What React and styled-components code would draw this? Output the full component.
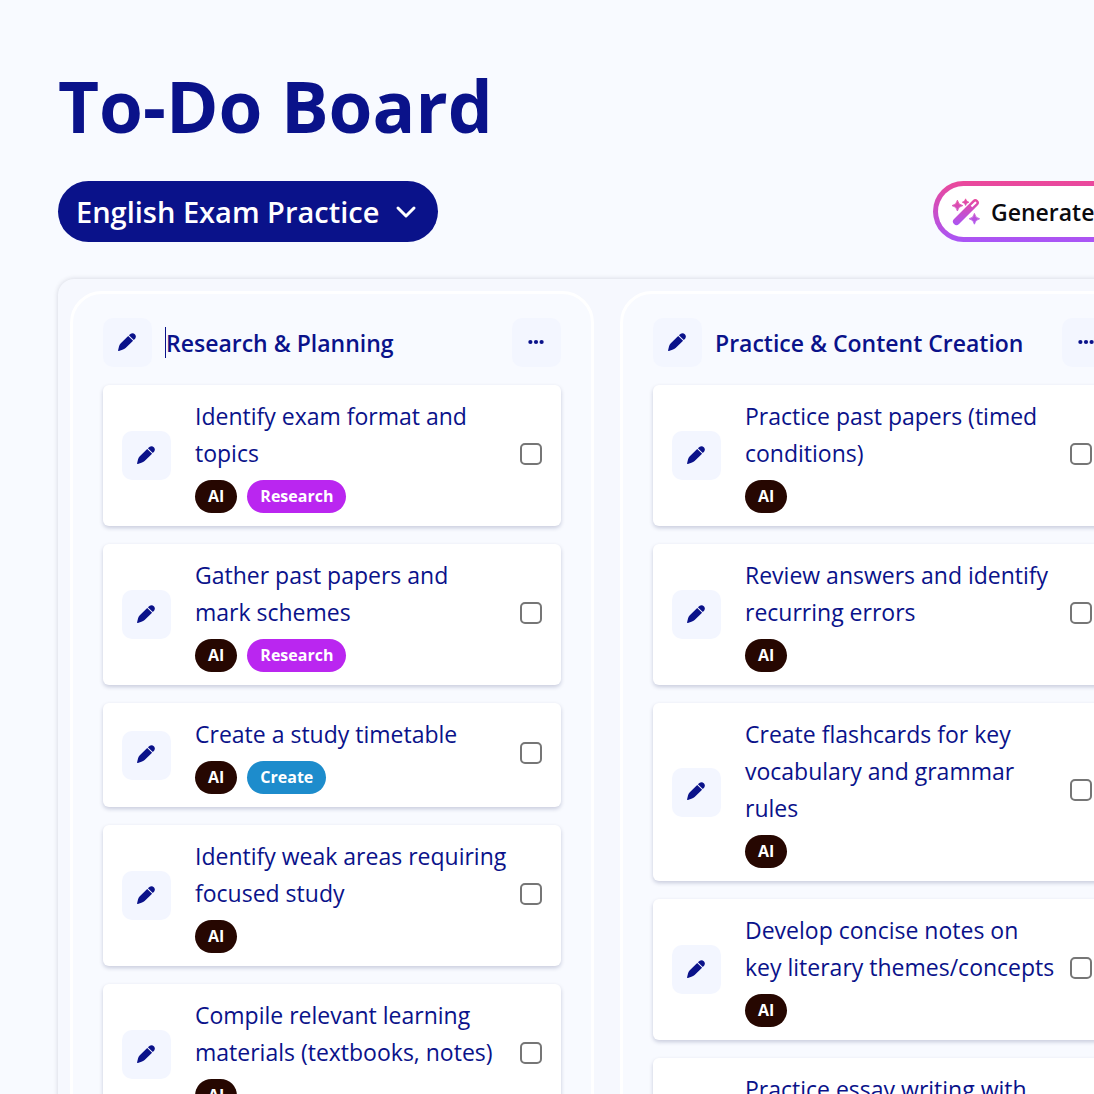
import styled, { createGlobalStyle } from "styled-components";

const GlobalStyle = createGlobalStyle`
  * {
    box-sizing: border-box;
  }

  html {
    scrollbar-width: none;
  }

  body {
    margin: 0;
    background-color: #f8faff;
    color: #0a128a;
    font-family: "Open Sans", "Noto Sans", sans-serif;
  }

  button, input, select {
    font-family: inherit;
    color: inherit;
  }
`;

const Page = styled.div`
  min-height: 100vh;
  padding: 59px 58px;
  overflow-x: hidden;
  scrollbar-width: none;
`;

const Content = styled.main`
  display: flex;
  flex-direction: column;
  width: max-content;
  min-width: 100%;
`;

const PageTitle = styled.h1`
  margin: 0 0 28px;
  font-size: 71px;
  line-height: 94px;
  font-weight: 700;
`;

const Toolbar = styled.div`
  display: flex;
  justify-content: space-between;
  align-items: center;
  margin-bottom: 37px;
`;

const BoardPicker = styled.div`
  display: grid;
  align-items: center;
  border-radius: 31px;
  background-color: #0a128a;
  color: #ffffff;
`;

const BoardSelect = styled.select`
  grid-area: 1 / 1;
  height: 61px;
  padding: 0 58px 0 18px;
  border: none;
  border-radius: 31px;
  appearance: none;
  background: none;
  font-size: 29px;
  font-weight: 600;
`;

const PickerArrow = styled.svg`
  grid-area: 1 / 1;
  justify-self: end;
  width: 22px;
  height: 22px;
  margin-right: 21px;
  pointer-events: none;
`;

const GenerateBtn = styled.button`
  display: flex;
  align-items: center;
  gap: 11px;
  min-width: 223px;
  height: 61px;
  padding: 0 14px;
  border: 5px solid transparent;
  border-radius: 31px;
  background:
    linear-gradient(#ffffff, #ffffff) padding-box,
    linear-gradient(#ec4899, #a855f7) border-box;
  color: #0b0b0f;
  font-size: 23px;
  font-weight: 600;
`;

const Board = styled.section`
  display: flex;
  align-items: flex-start;
  gap: 26px;
  padding: 12px;
  border-radius: 16px;
  background-color: #f6f8fe;
  box-shadow: 0 0 5px rgba(20, 20, 50, 0.16);
`;

const Column = styled.section`
  display: flex;
  flex-direction: column;
  flex: 0 0 auto;
  gap: 18px;
  width: 524px;
  padding: 24px 30px;
  border: 3px solid #ffffff;
  border-radius: 32px;
  background-color: #f8faff;
`;

const ColumnHeader = styled.header`
  display: flex;
  align-items: center;
  gap: 13px;
`;

const ColumnTitle = styled.input`
  flex: 1;
  min-width: 0;
  height: 31px;
  padding: 0;
  border: 0 solid #0a128a;
  border-left-width: ${({ $editing }) => ($editing ? "1px" : "0")};
  background: none;
  font-size: 23px;
  font-weight: 600;
`;

const SquareBtn = styled.button`
  display: flex;
  flex-shrink: 0;
  justify-content: center;
  align-items: center;
  width: 49px;
  height: 49px;
  padding: 0 1px 2px 0;
  border: none;
  border-radius: 10px;
  background-color: #f3f6ff;
`;

const TaskList = styled.ul`
  display: flex;
  flex-direction: column;
  gap: 18px;
  margin: 0;
  padding: 0;
  list-style: none;
`;

const Card = styled.li`
  display: flex;
  align-items: center;
  padding: 13px 19px;
  border-radius: 6px;
  background-color: #ffffff;
  box-shadow: 0 2px 4px rgba(10, 18, 80, 0.2);
`;

const CardBody = styled.div`
  flex: 1;
  min-width: 0;
  margin: 0 11px 0 24px;
`;

const CardText = styled.label`
  display: block;
  font-size: 23px;
  line-height: 37px;
`;

const Tags = styled.div`
  display: flex;
  gap: 10px;
  margin-top: 8px;
`;

const Tag = styled.span`
  padding: 0 13px;
  border-radius: 17px;
  background-color: ${({ $color }) => $color};
  color: #ffffff;
  font-size: 16px;
  line-height: 33px;
  font-weight: 700;
`;

const Check = styled.input`
  flex-shrink: 0;
  width: 22px;
  height: 22px;
  margin: 0 0 4px;
  border: 2px solid #767676;
  border-radius: 5px;
  appearance: none;
  background-color: #ffffff;

  &:checked {
    background-color: #0a128a;
  }
`;

const PencilIcon = () => (
  <svg width="20" height="20" viewBox="0 0 20 20" fill="currentColor" aria-hidden="true">
    <path d="M11.2 3.9 16.1 8.8 8.6 16Q7.2 17.2 5.4 17.8L1.9 18.9Q.9 19.2 1.1 18.2L2 14.6Q2.4 12.6 3.8 11.2Z" />
    <path d="M11.9 3.2 13.4 1.9C16.4-.5 20.4 3.3 18.2 6.4L16.8 8.1Z" />
  </svg>
);

const DotsIcon = () => (
  <svg width="16" height="6" viewBox="0 0 16 6" fill="currentColor" aria-hidden="true">
    <circle cx="2.4" cy="3" r="2.1" />
    <circle cx="8" cy="3" r="2.1" />
    <circle cx="13.6" cy="3" r="2.1" />
  </svg>
);

const WandIcon = () => (
  <svg width="28" height="28" viewBox="0 0 28 28" aria-hidden="true">
    <defs>
      <linearGradient id="wand" x1="0" y1="0" x2="0" y2="28" gradientUnits="userSpaceOnUse">
        <stop stopColor="#ec4899" />
        <stop offset="1" stopColor="#a855f7" />
      </linearGradient>
    </defs>
    <g fill="url(#wand)">
      <path
        fillRule="evenodd"
        d="M20.8 2.2a3.5 3.5 0 0 1 5 5L7 26a3.5 3.5 0 0 1-5-5ZM18.7 7.8l1.5 1.5 3.9-3.9a1.06 1.06 0 0 0-1.5-1.5Z"
      />
      <path d="M5.4 2.2Q6.2 6.8 10.8 7.6 6.2 8.4 5.4 13 4.6 8.4 0 7.6 4.6 6.8 5.4 2.2Z" stroke="url(#wand)" strokeWidth=".8" />
      <path d="M13.6.8Q14.2 3.6 17 4.2 14.2 4.8 13.6 7.6 13 4.8 10.2 4.2 13 3.6 13.6.8Z" stroke="url(#wand)" strokeWidth=".6" />
      <path d="M22.4 15.4Q23.2 20 27.6 20.8 23.2 21.6 22.4 26.2 21.6 21.6 17.2 20.8 21.6 20 22.4 15.4Z" stroke="url(#wand)" strokeWidth=".8" />
    </g>
  </svg>
);

const TAG_COLORS = {
  AI: "#260701",
  Research: "#ba26f0",
  Create: "#1d8ccc",
};

const columns = [
  {
    title: "Research & Planning",
    editing: true,
    tasks: [
      { text: "Identify exam format and topics", tags: ["AI", "Research"] },
      { text: "Gather past papers and mark schemes", tags: ["AI", "Research"] },
      { text: "Create a study timetable", tags: ["AI", "Create"] },
      { text: "Identify weak areas requiring focused study", tags: ["AI"] },
      { text: "Compile relevant learning materials (textbooks, notes)", tags: ["AI"] },
    ],
  },
  {
    title: "Practice & Content Creation",
    tasks: [
      { text: "Practice past papers (timed conditions)", tags: ["AI"] },
      { text: "Review answers and identify recurring errors", tags: ["AI"] },
      { text: "Create flashcards for key vocabulary and grammar rules", tags: ["AI"] },
      { text: "Develop concise notes on key literary themes/concepts", tags: ["AI"] },
      { text: "Practice essay writing with feedback", tags: ["AI"] },
    ],
  },
];

const TaskCard = ({ id, task }) => (
  <Card>
    <SquareBtn aria-label="Edit task">
      <PencilIcon />
    </SquareBtn>
    <CardBody>
      <CardText htmlFor={id}>{task.text}</CardText>
      <Tags>
        {task.tags.map((tag) => (
          <Tag key={tag} $color={TAG_COLORS[tag]}>
            {tag}
          </Tag>
        ))}
      </Tags>
    </CardBody>
    <Check type="checkbox" id={id} />
  </Card>
);

const App = () => {
  return (
    <>
      <GlobalStyle />
      <Page>
        <Content>
          <PageTitle>To-Do Board</PageTitle>
          <Toolbar>
            <BoardPicker>
              <BoardSelect aria-label="Board">
                <option>English Exam Practice</option>
              </BoardSelect>
              <PickerArrow viewBox="0 0 22 22" fill="none" stroke="currentColor" strokeWidth="3" strokeLinecap="round" strokeLinejoin="round">
                <path d="M3 7 11 15 19 7" />
              </PickerArrow>
            </BoardPicker>
            <GenerateBtn>
              <WandIcon />
              Generate
            </GenerateBtn>
          </Toolbar>
          <Board>
            {columns.map((column, c) => (
              <Column key={column.title}>
                <ColumnHeader>
                  <SquareBtn aria-label="Edit column">
                    <PencilIcon />
                  </SquareBtn>
                  <ColumnTitle
                    aria-label="Column title"
                    defaultValue={column.title}
                    $editing={column.editing}
                  />
                  <SquareBtn aria-label="Column menu">
                    <DotsIcon />
                  </SquareBtn>
                </ColumnHeader>
                <TaskList>
                  {column.tasks.map((task, i) => (
                    <TaskCard key={task.text} id={`task-${c}-${i}`} task={task} />
                  ))}
                </TaskList>
              </Column>
            ))}
          </Board>
        </Content>
      </Page>
    </>
  );
};

export default App;
